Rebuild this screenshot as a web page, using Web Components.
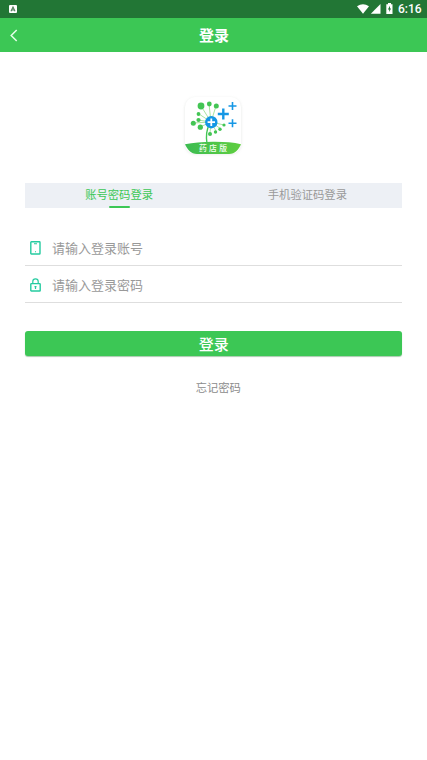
<!DOCTYPE html>
<html lang="zh-CN">
<head>
<meta charset="utf-8">
<title>登录</title>
<style>
html, body { margin: 0; height: 100%; background: #fff; }
body { font-family: Roboto, "Noto Sans CJK SC", sans-serif; overflow: hidden; }
</style>
</head>
<body>
<login-page></login-page>
<script>
function define(name, html) {
  const template = document.createElement('template');
  template.innerHTML = html;
  customElements.define(name, class extends HTMLElement {
    constructor() {
      super();
      this.attachShadow({ mode: 'open' }).appendChild(template.content.cloneNode(true));
    }
  });
}

define('status-bar', `
<style>
:host { display: flex; align-items: center; height: 18px; box-sizing: border-box; padding: 0 6px 0 9px; background: #227635; color: #fff; }
svg { display: block; flex: none; }
.badge { margin-right: auto; }
.battery { margin-left: 4px; }
.time { font: 500 12px/18px Roboto, sans-serif; margin-left: 5px; width: 23px; white-space: nowrap; }
</style>
<svg class="badge" width="8" height="8" viewBox="0 0 8 8"><rect width="8" height="8" rx="1" fill="#fff"/><path d="M2 6.2 4 2l2 4.2M2.8 5h2.4" fill="none" stroke="#4d7d58" stroke-width="1.1"/></svg>
<svg width="25" height="12" viewBox="0 0 25 12" fill="#fff">
<path d="M0 3.3Q6 -.8 12 3.3L6 10.8Z"/><path d="M23.5 1v9.8H13.8Z"/>
</svg>
<svg class="battery" width="7" height="12" viewBox="0 0 7 12"><path d="M2 0h3v1.2h1.5V11H.3V1.2H2z" fill="#fff"/><path d="M4 2.8 1.9 6.4h1.3V9L5.1 5.5H4z" fill="#227635"/></svg>
<span class="time">6:16</span>`);

define('title-bar', `
<style>
:host { display: grid; grid-template-columns: 40px 1fr 39px; align-items: center; height: 34px; background: #3cc755; color: #fff; text-align: center; font: 700 15px/34px "Noto Sans CJK SC", sans-serif; }
svg { display: block; margin-left: 10px; }
</style>
<svg width="8" height="13" viewBox="0 0 8 13"><path d="M6.7 1 1.2 6.5 6.7 12" fill="none" stroke="#e5ffe9" stroke-width="1.5"/></svg>
<slot></slot>`);

define('app-logo', `
<style>:host { display: block; width: 76px; height: 80px; } svg { display: block; } text { font: 500 7.8px "Noto Sans CJK SC", sans-serif; }</style>
<svg width="76" height="80" viewBox="0 0 76 80">
<defs>
<linearGradient id="leaf" x2="1"><stop stop-color="#3cbc52"/><stop offset="1" stop-color="#5fce40"/></linearGradient>
<filter id="soft" x="-20%" y="-20%" width="140%" height="140%"><feGaussianBlur stdDeviation="1.8"/></filter></defs>
<rect x="10" y="13" width="56" height="56" rx="10" fill="#8a9a8a" opacity=".25" filter="url(#soft)"/>
<rect x="10" y="12" width="56" height="57" rx="10" fill="#fff"/>
<path d="M10 59.2Q22 57 38 56.8T66 59.2C64 64 60 69 54 69H22C16 69 12 64 10 59.2Z" fill="url(#leaf)"/>
<g fill="none" stroke="#6fd05f" stroke-width=".6"><path d="M36 37 26 21M36 37 34 19M36 37 41 21M36 37 24 29M36 37 23 35M36 37 18 38M36 37 25 42M36 37 35 48M36 37 41 46M36 37 46 44M36 37 49 40"/><path d="M35 38Q30 47 32 59" stroke="#43c554" stroke-width="1.4"/></g>
<g fill="#43c554"><circle cx="26" cy="21" r="3.4"/><circle cx="34.3" cy="19" r="2.4"/><circle cx="41.3" cy="21" r="2.5"/><circle cx="23.5" cy="29" r="1.9"/><circle cx="23.5" cy="35" r="2.1"/><circle cx="18.3" cy="38.3" r="2.5"/><circle cx="25.3" cy="42.2" r="2.6"/><circle cx="35" cy="49" r="2"/><circle cx="40.5" cy="47" r="1.7"/><circle cx="45" cy="44.3" r="1.7"/><circle cx="49" cy="40" r="1.6"/></g>
<circle cx="36.3" cy="37.2" r="6.2" fill="#1597e5"/><path d="M32.6 37.2h7.4M36.3 33.5v7.4" stroke="#fff" stroke-width="1.8"/>
<g stroke="#1597e5"><path d="M42.8 29h11M48.3 23.5v11" stroke-width="2.4"/><path d="M53.5 21h8M57.5 17v8M53.5 38.3h8M57.5 34.3v8" stroke-width="1.6"/></g>
<text x="24" y="65.8" fill="#f4fff0" textLength="28">药店版</text>
</svg>`);

define('login-tab', `
<style>
:host { display: flex; flex: 1; flex-direction: column; align-items: center; justify-content: space-between; color: #999; font-size: 11.33px; line-height: 23px; }
span { height: 22px; }
i { width: 21px; height: 2.4px; border-radius: 1px; }
:host([active]) { color: #3cc755; }
:host([active]) i { background: #3cc755; }
</style><span><slot></slot></span><i></i>`);

define('login-tabs', `
<style>:host { display: flex; height: 25px; background: #edf0f5; }</style><slot></slot>`);

define('login-field', `
<style>
:host { display: flex; align-items: center; height: 36px; border-bottom: 1px solid #dedede; color: #999; font-size: 13px; line-height: 36px; }
span { padding-top: 2px; }
::slotted(svg) { display: block; flex: none; margin: 1px 11px 0 5px; }
</style><slot name="icon"></slot><span><slot></slot></span>`);

define('login-button', `
<style>:host { display: block; height: 25px; padding-left: 1px; border-radius: 3px; background: #3cc755; box-shadow: 0 1px 1px #a9c9af; color: #fff; text-align: center; font-size: 15px; font-weight: 500; line-height: 25px; }</style><slot></slot>`);

define('login-page', `
<style>
:host { display: block; font-family: "Noto Sans CJK SC", sans-serif; }
main { padding: 33px 25.5px 0 25px; }
app-logo { margin: 0 auto; }
login-tabs { margin-top: 18px; }
.fields { margin-top: 21px; }
login-button { margin-top: 28px; }
.forgot { margin: 23px 0 0 10px; text-align: center; color: #8c8c8c; font-size: 11.3px; line-height: 16px; }
</style>
<status-bar></status-bar>
<title-bar>登录</title-bar>
<main>
<app-logo></app-logo>
<login-tabs><login-tab active>账号密码登录</login-tab><login-tab>手机验证码登录</login-tab></login-tabs>
<div class="fields">
<login-field><svg slot="icon" width="11" height="14" viewBox="0 0 11 14" fill="none" stroke="#25cba0" stroke-width="1.4"><rect x=".8" y=".8" width="9.2" height="12.2" rx=".6"/><path d="M4 2.8h3M5 10.7h1" stroke-width="1.1"/></svg>请输入登录账号</login-field>
<login-field><svg slot="icon" width="11" height="14" viewBox="0 0 11 14" fill="none" stroke="#25cba0" stroke-width="1.4"><rect x=".8" y="5.6" width="9.4" height="7.4" rx=".6"/><path d="M2.8 5.5V3.5a2.7 2.7 0 0 1 5.4 0v2M5.5 8.2v2.7M4.5 8.6h2" stroke-width="1.2"/></svg>请输入登录密码</login-field>
</div>
<login-button>登录</login-button>
<div class="forgot">忘记密码</div>
</main>`);
</script>
</body>
</html>
